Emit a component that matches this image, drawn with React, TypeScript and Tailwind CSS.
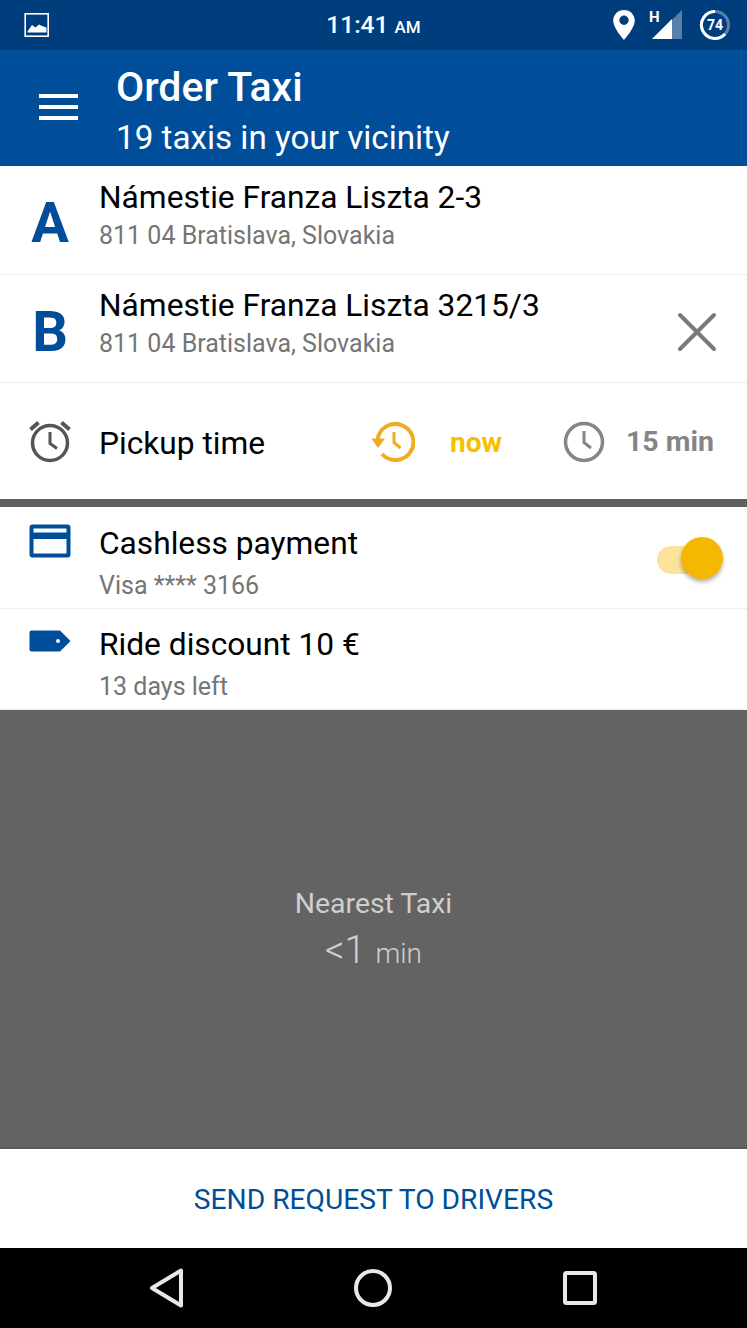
const roboto = "font-['Roboto',sans-serif]";

function PictureIcon() {
  return (
    <svg width="26" height="26" viewBox="0 0 26 26" className="ml-[24px]">
      <rect x="1.2" y="1.8" width="23" height="22.4" fill="none" stroke="#fff" strokeWidth="1.6" />
      <path d="M3.5 19.5 L8 13 L11.5 15.5 L15 12.5 L18 14 L22.5 15.5 V20.5 H3.5Z" fill="#fff" />
    </svg>
  );
}

function StatusIcons() {
  return (
    <div className="ml-auto flex items-center">
      <svg width="24" height="32" viewBox="0 0 24 32">
        <path
          fillRule="evenodd"
          d="M12 1C5.9 1 1.2 5.7 1.2 11.6 1.2 19.4 12 31 12 31s10.8-11.6 10.8-19.4C22.8 5.7 18.100 1 12 1Zm0 15a4.700 4.700 0 1 1 0-9.400 4.700 4.700 0 0 1 0 9.400Z"
          fill="#fff"
        />
      </svg>
      <svg width="36" height="32" viewBox="0 0 36 32" className="ml-[13px]">
        <path d="M33 1 V30 H3Z" fill="#fff" fillOpacity="0.35" />
        <path d="M23 10 V30 H3Z" fill="#fff" />
        <text x="0" y="13" fontSize="15" fontWeight="700" fill="#fff" fontFamily="Roboto, sans-serif">H</text>
      </svg>
      <svg width="34" height="34" viewBox="0 0 34 34" className="mr-[15px] ml-[13px]">
        <circle cx="17" cy="17" r="13.500" fill="none" stroke="#fff" strokeOpacity="0.35" strokeWidth="3" />
        <path d="M27 26 A13.500 13.500 0 1 1 17 3.500" fill="none" stroke="#fff" strokeWidth="3" />
        <text x="17" y="22" textAnchor="middle" fontSize="14" fontWeight="700" fill="#fff" fontFamily="Roboto, sans-serif">74</text>
      </svg>
    </div>
  );
}

function AlarmIcon() {
  return (
    <svg width="44" height="44" viewBox="0 0 44 44" fill="none" stroke="#555" strokeWidth="3.500">
      <circle cx="22" cy="24" r="17.500" />
      <path d="M22 13 V24.500 L29 29.500" strokeWidth="3" />
      <path d="M2.500 10.500 L10.500 3.500 M41.500 10.500 L33.500 3.500" strokeWidth="4" />
    </svg>
  );
}

function HistoryIcon() {
  return (
    <svg width="44" height="42" viewBox="0 0 44 42" fill="none" className="mt-[2px]">
      <path d="M6.500 19 A18 18 0 1 1 11 33" stroke="#f0ac20" strokeWidth="4" />
      <path d="M0.500 17.500 H14 L7 27Z" fill="#f0ac20" />
      <path d="M23 11 V21.500 L29.500 27" stroke="#f0ac20" strokeWidth="3" />
    </svg>
  );
}

function ClockIcon() {
  return (
    <svg width="42" height="42" viewBox="0 0 42 42" fill="none" stroke="#858585" strokeWidth="3.500" className="mt-[2px]">
      <circle cx="21" cy="21" r="18.500" />
      <path d="M21 10 V21.500 L28 27" strokeWidth="3" />
    </svg>
  );
}

function CardIcon() {
  return (
    <svg width="42" height="34" viewBox="0 0 42 34">
      <path
        fillRule="evenodd"
        d="M3.500 0.500 H38.500 A3 3 0 0 1 41.500 3.500 V30.500 A3 3 0 0 1 38.500 33.500 H3.500 A3 3 0 0 1 0.500 30.500 V3.500 A3 3 0 0 1 3.500 0.500Z M4.500 4.500 V8.500 H37.500 V4.500Z M4.500 15 V29.500 H37.500 V15Z"
        fill="#004e9a"
      />
    </svg>
  );
}

function TagIcon() {
  return (
    <svg width="42" height="22" viewBox="0 0 42 22">
      <path
        fillRule="evenodd"
        d="M2.500 0.500 H31 L41.500 11 L31 21.500 H2.500 A2 2 0 0 1 0.500 19.500 V2.500 A2 2 0 0 1 2.500 0.500Z M29 9 A2 2 0 1 0 29 13 A2 2 0 1 0 29 9Z"
        fill="#004e9a"
      />
    </svg>
  );
}

function AddressRow({ letter, street, city, last }: { letter: string; street: string; city: string; last?: boolean }) {
  return (
    <div className={`flex border-b border-[#eeeeee] bg-white ${last ? 'h-[108px]' : 'h-[109px]'}`}>
      <div className="w-[100px] pt-[22px] text-center text-[56px] leading-[70px] font-bold text-[#004e9a]">{letter}</div>
      <div className={`-ml-px flex-1 ${last ? 'pt-[11px]' : 'pt-[12px]'}`}>
        <div className="text-[31.7px] leading-[40px] text-black">{street}</div>
        <div className="text-[25px] leading-[36px] text-[#757575]">{city}</div>
      </div>
      {last && (
        <svg width="40" height="40" viewBox="0 0 40 40" className="mt-[37px] mr-[30px]" stroke="#7a7a7a" strokeWidth="4" strokeLinecap="round">
          <path d="M3 3 L37 37 M37 3 L3 37" />
        </svg>
      )}
    </div>
  );
}

function OptionRow({ icon, title, sub, iconTop, children }: { icon: React.ReactNode; title: string; sub: string; iconTop: string; children?: React.ReactNode }) {
  return (
    <div className="flex h-[101px] border-b border-[#eeeeee] bg-white">
      <div className={`w-[100px] pl-[29px] ${iconTop}`}>{icon}</div>
      <div className="-ml-px flex-1 pt-[15px]">
        <div className="text-[31.7px] leading-[41px] text-black">{title}</div>
        <div className="mt-[4px] text-[25px] leading-[36px] text-[#757575]">{sub}</div>
      </div>
      {children}
    </div>
  );
}

export default function App() {
  return (
    <div className={`${roboto} flex h-[1328px] w-[747px] flex-col overflow-hidden bg-white`}>
      {/* status bar */}
      <div className="relative flex h-[50px] items-center bg-[#003d7d] text-white">
        <PictureIcon />
        <div className="absolute inset-x-0 pt-[2px] text-center text-[24.5px] leading-[50px] font-medium">
          11:41 <span className="text-[17px]">AM</span>
        </div>
        <StatusIcons />
      </div>

      {/* app bar */}
      <div className="flex h-[116px] bg-[#004e9a] text-white">
        <div className="flex w-[117px] flex-col gap-[7px] pt-[44px] pl-[39px]">
          <div className="h-[4px] w-[39px] bg-white" />
          <div className="h-[4px] w-[39px] bg-white" />
          <div className="h-[4px] w-[39px] bg-white" />
        </div>
        <div className="-ml-px pt-[13px]">
          <div className="text-[41px] leading-[48px] font-medium">Order Taxi</div>
          <div className="mt-[2px] text-[33.200px] leading-[50px]">19 taxis in your vicinity</div>
        </div>
      </div>

      <AddressRow letter="A" street="Námestie Franza Liszta 2-3" city="811 04 Bratislava, Slovakia" />
      <AddressRow letter="B" street="Námestie Franza Liszta 3215/3" city="811 04 Bratislava, Slovakia" last />

      {/* pickup time */}
      <div className="flex h-[116px] items-center bg-white">
        <div className="w-[99px] pl-[28px]">
          <AlarmIcon />
        </div>
        <div className="w-[272px] pt-[5px] text-[31.7px] text-black">Pickup time</div>
        <HistoryIcon />
        <div className="ml-[35px] w-[113px] pt-[3px] text-[28px] font-bold text-[#f5c000]">now</div>
        <ClockIcon />
        <div className="ml-[21px] pt-[3px] text-[28.500px] font-bold text-[#858585]">15 min</div>
      </div>

      <div className="h-[8px] bg-[#606060]" />

      <div className="h-px bg-white" />
      <OptionRow icon={<CardIcon />} title="Cashless payment" sub="Visa **** 3166" iconTop="pt-[16px]">
        <div className="relative mt-[37px] mr-[24px] h-[29px] w-[66px]">
          <div className="mt-[1px] h-[28px] w-[50px] rounded-full bg-[#fbe39c]" />
          <div className="absolute top-[-8px] right-0 h-[42px] w-[42px] rounded-full bg-[#f5b800] shadow-[0_3px_4px_rgba(0,0,0,0.3)]" />
        </div>
      </OptionRow>
      <OptionRow icon={<TagIcon />} title="Ride discount 10 €" sub="13 days left" iconTop="pt-[21px]" />

      {/* nearest taxi */}
      <div className="flex h-[439px] flex-col items-center border-b-2 border-[#5a5a5a] bg-[#636363] pt-[174px] text-[#cfcfcf]">
        <div className="text-[28.400px] leading-[40px]">Nearest Taxi</div>
        <div className="mt-[1px] flex items-baseline font-light">
          <span className="text-[38px] leading-[50px]">&lt;1</span>
          <span className="ml-[10px] text-[28px] leading-[50px]">min</span>
        </div>
      </div>

      {/* send button */}
      <div className="flex h-[99px] items-center justify-center bg-white pt-[3px] text-[28.200px] text-[#004e9a]">SEND REQUEST TO DRIVERS</div>

      {/* android nav */}
      <div className="flex h-[80px] items-center bg-black">
        <svg width="36" height="40" viewBox="0 0 36 40" fill="none" stroke="#e8e8e8" strokeWidth="4" strokeLinejoin="round" className="ml-[149px]">
          <path d="M32 2.500 V37.500 L3 20Z" />
        </svg>
        <svg width="40" height="40" viewBox="0 0 40 40" fill="none" stroke="#e8e8e8" strokeWidth="4" className="ml-[168px]">
          <circle cx="20" cy="20" r="17" />
        </svg>
        <svg width="34" height="34" viewBox="0 0 34 34" fill="none" stroke="#e8e8e8" strokeWidth="4" strokeLinejoin="round" className="ml-[170px]">
          <rect x="2" y="2" width="30" height="30" rx="1.500" />
        </svg>
      </div>
    </div>
  );
}
